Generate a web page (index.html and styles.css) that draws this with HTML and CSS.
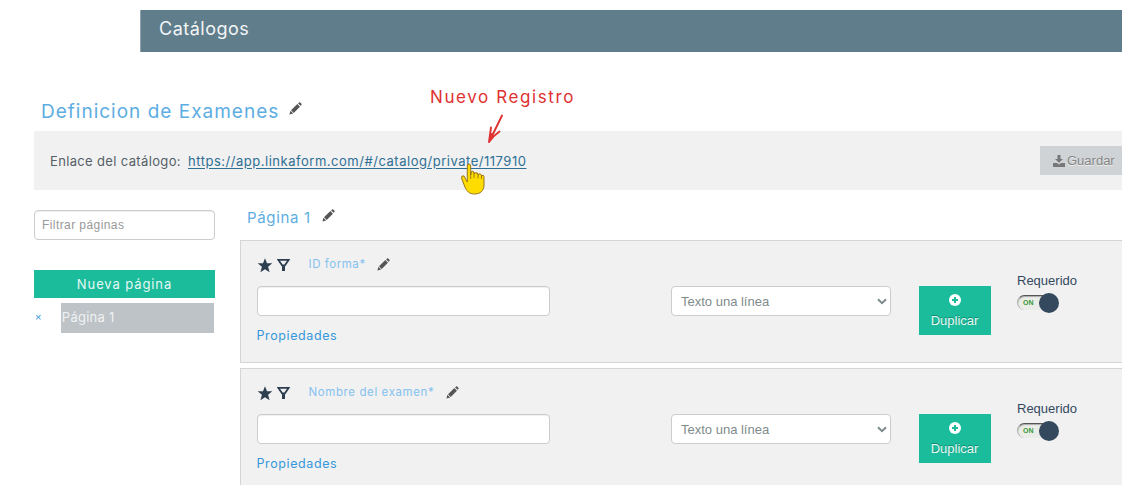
FILE: index.html
```html
<!DOCTYPE html>
<html lang="es">
<head>
<meta charset="utf-8">
<title>Catálogos</title>
<link rel="stylesheet" href="styles.css">
</head>
<body>
<svg width="0" height="0" class="defs">
  <symbol id="pencil" viewBox="0 0 14 14"><path d="M.5 13.500l1-4 3 3zM2.200 8.800L9 2.200l2.800 2.800-6.700 6.800zM9.800 1.500l1-1q.7-.5 1.300.1l1.300 1.300q.5.600 0 1.300l-.9.900z" fill="#555"/></symbol>
  <symbol id="star" viewBox="0 0 16 15"><path d="M8 .3l2 5h5.300l-4.200 3.500 1.500 5.500L8 11.200l-4.600 3.100 1.500-5.500L.7 5.300H6z" fill="#2c3e50"/></symbol>
  <symbol id="filter" viewBox="0 0 13 14"><path d="M1.300 1.800h10.400L7.900 7.300H5.100zM6.500 7v6" fill="none" stroke="#2c3e50" stroke-width="1.700"/><path d="M5 7h3v6H5z" fill="#2c3e50"/></symbol>
  <symbol id="plus" viewBox="0 0 12 12"><circle cx="6" cy="6" r="6" fill="#fff"/><path d="M6 3v6M3 6h6" stroke="#1abc9c" stroke-width="2"/></symbol>
  <symbol id="chevron" viewBox="0 0 10 7"><path d="M1 1.300l4 3.800 4-3.800" fill="none" stroke="#7b8a8b" stroke-width="2"/></symbol>
</svg>
<div class="app">
  <header class="topbar">Catálogos</header>
  <h1 class="title"><span class="title-text">Definicion de Examenes</span><svg class="pencil"><use href="#pencil"/></svg></h1>
  <section class="linkbar">
    <span class="link-label">Enlace del catálogo:</span>
    <a class="link">https://app.linkaform.com/#/catalog/private/117910</a>
    <button class="save"><svg width="12" height="12" viewBox="0 0 12 12"><path d="M4.500 0h3v4H10L6 7.800 2 4h2.500zM0 8h4l2 1.500L8 8h4v4H0z" fill="#777"/></svg>Guardar</button>
  </section>
  <main class="content">
    <aside class="side">
      <input class="field search" placeholder="Filtrar páginas">
      <button class="new-page">Nueva página</button>
      <div class="page-row"><span class="remove">×</span><span class="page-tab">Página 1</span></div>
    </aside>
    <section class="fields">
      <h2 class="page-title"><span class="page-text">Página 1</span><svg class="pencil"><use href="#pencil"/></svg></h2>
      <article class="card">
        <div class="main-col">
          <div class="card-head"><svg class="star"><use href="#star"/></svg><svg class="filter"><use href="#filter"/></svg><span class="name name-a">ID forma*</span><svg class="pencil"><use href="#pencil"/></svg></div>
          <input class="field">
          <a class="props">Propiedades</a>
        </div>
        <div class="select">Texto una línea<svg width="10" height="7"><use href="#chevron"/></svg></div>
        <button class="dup"><svg width="12" height="12"><use href="#plus"/></svg><span>Duplicar</span></button>
        <div class="req">Requerido<div class="toggle"><b>ON</b><i class="dot"></i><i class="knob"></i></div></div>
      </article>
      <article class="card">
        <div class="main-col">
          <div class="card-head"><svg class="star"><use href="#star"/></svg><svg class="filter"><use href="#filter"/></svg><span class="name name-b">Nombre del examen*</span><svg class="pencil"><use href="#pencil"/></svg></div>
          <input class="field">
          <a class="props">Propiedades</a>
        </div>
        <div class="select">Texto una línea<svg width="10" height="7"><use href="#chevron"/></svg></div>
        <button class="dup"><svg width="12" height="12"><use href="#plus"/></svg><span>Duplicar</span></button>
        <div class="req">Requerido<div class="toggle"><b>ON</b><i class="dot"></i><i class="knob"></i></div></div>
      </article>
    </section>
  </main>
  <div class="note">Nuevo Registro</div>
  <svg class="arrow" width="20" height="32" viewBox="0 0 20 32" fill="none" stroke="#e03131" stroke-width="1.900" stroke-linecap="round" stroke-linejoin="round"><path d="M15 1.500Q9 14 2 28M4 13.500Q3 21 2 28Q6 22 12.500 17.500M2 28L5 20"/></svg>
  <svg class="hand" width="26" height="33" viewBox="0 0 26 33"><path d="M7.300 3Q7.500 1 9 1T10.700 3V12L11 9Q12.500 7.500 14 9V11Q16 8.500 18 10.500V12Q20 9.500 21.500 12V13Q23.500 11 24 13.500V22C24 28 20 31 14.500 31C9 31 6.500 28 4.500 23L1.500 15Q1.500 12 4 13L7.300 19Z" fill="#ffdc00" stroke="#9a7519"/><path d="M10.700 9v7M14 9.500V15M18 11v4.500M21.500 12.500V16" fill="none" stroke="#9a7519" stroke-width=".9"/></svg>
</div>
</body>
</html>
```
FILE: styles.css
```css
* { box-sizing: border-box; }
body { margin: 0; background: #fff; color: #34495e; font: 13px "Liberation Sans", sans-serif; }
button { border: 0; border-radius: 0; padding: 0; font: inherit; }
.defs { display: block; position: absolute; }
.app { position: relative; width: 1122px; height: 485px; overflow: hidden; padding-top: 10px; }
.topbar { height: 42px; margin-left: 140px; padding-left: 18px; background: #607d8b; border-left: 1px solid #8fa3ad; color: #f2f5f6; font: 18px/37px Inter, sans-serif; letter-spacing: .5px; }
.title { display: flex; align-items: center; height: 30px; margin: 44px 0 0 41px; padding-top: 2px; font: 19px/30px Inter, sans-serif; color: #5dade2; }
.title-text { width: 248px; white-space: nowrap; letter-spacing: 1px; }
.pencil { width: 13px; height: 13px; flex: none; }
.title .pencil { margin-bottom: 7px; }
.linkbar { display: flex; align-items: center; height: 59px; margin: 5px 0 0 34px; padding-left: 16px; background: #f1f1f1; font: 13px Inter, sans-serif; white-space: nowrap; }
.link-label { width: 138px; color: #555f68; letter-spacing: .35px; }
.link { color: #2e6f94; text-decoration: underline; text-underline-offset: 2px; letter-spacing: .52px; }
.save { display: flex; align-items: center; gap: 2px; width: 82px; height: 29px; margin: 0 0 0 auto; padding-left: 13px; background: #cfd3d6; color: #858585; font: 13px "Liberation Sans", sans-serif; text-shadow: 0 1px #eee; }
.content { display: grid; grid-template-columns: 180px 882px; column-gap: 26px; padding-left: 34px; }
.side { padding-top: 20px; }
.field { display: block; height: 30px; width: 293px; border: 1px solid #ccc; border-radius: 4px; background: #fff; box-shadow: inset 0 1px 1px #0001; padding: 0 7px; font: 12px "Liberation Sans", sans-serif; }
.field::placeholder { color: #999; }
.search { width: 181px; letter-spacing: .42px; }
.new-page { display: block; width: 181px; height: 28px; margin-top: 30px; background: #1abc9c; color: #e5f8f3; font: 13px Inter, sans-serif; letter-spacing: .9px; }
.page-row { display: flex; height: 30px; margin-top: 5px; }
.remove { width: 27px; padding-left: 1px; color: #3498db; font: 11px/28px "Liberation Sans", sans-serif; }
.page-tab { width: 154px; padding-left: 1px; background: #bdc3c7; color: #f0f2f3; font: 13px/28px Inter, sans-serif; letter-spacing: .25px; }
.page-title { display: flex; align-items: center; height: 50px; margin: 0; padding: 4px 0 0 7px; font: 15px Inter, sans-serif; color: #5dade2; }
.page-text { width: 75px; letter-spacing: .65px; }
.page-title .pencil { margin-bottom: 4px; }
.card { display: flex; height: 123px; margin-bottom: 5px; padding-left: 15.500px; background: #f1f1f1; border: 1px solid #d5d5d5; border-right: 0; }
.main-col { width: 414px; padding-top: 13px; }
.card-head { display: flex; align-items: center; height: 20px; margin-bottom: 12px; }
.star { width: 16px; height: 15px; margin: 2px 4px 0 .5px; }
.filter { width: 13px; height: 14px; margin: 2px 18.500px 0 0; }
.name { font: 11.500px Inter, sans-serif; color: #85c1f0; letter-spacing: .6px; white-space: nowrap; }
.name-a { width: 68px; letter-spacing: .55px; }
.name-b { width: 137px; }
.props { display: block; margin-top: 12px; color: #3498db; font: 12.500px/16px Inter, sans-serif; letter-spacing: .6px; }
.select { display: flex; align-items: center; justify-content: space-between; width: 220px; height: 30px; margin-top: 45px; padding: 0 3px 0 9.500px; border: 1px solid #ccc; border-radius: 4px; background: #fff; color: #7f8c8d; }
.dup { display: flex; flex-direction: column; align-items: center; gap: 6px; width: 72px; height: 49px; margin: 45px 0 0 28px; padding-top: 8px; background: #1abc9c; color: #e8faf5; line-height: 18px; text-shadow: 0 -1px #16866f; }
.req { width: 70px; margin: 31px 0 0 26.500px; line-height: 17px; }
.toggle { display: flex; align-items: center; position: relative; width: 38px; height: 15px; margin-top: 6px; padding-left: 5px; border-top: 1px solid #555; border-left: 1px solid #aaa; border-radius: 8px; background: #e9ece7; box-shadow: inset 0 1px 1px #aaa; }
.toggle b { color: #389838; font-size: 7px; line-height: 10px; }
.dot { width: 4px; height: 4px; margin-left: 5px; border-radius: 50%; background: #b66b3a; }
.knob { position: absolute; left: 21px; top: -3px; width: 20px; height: 20px; border-radius: 50%; background: #34495e; }
.note { position: absolute; left: 430px; top: 86px; color: #e03131; font: 400 17px/22px Inter, sans-serif; letter-spacing: 1.600px; white-space: nowrap; }
.arrow { position: absolute; left: 487px; top: 114px; }
.hand { position: absolute; left: 460px; top: 163px; }
```
